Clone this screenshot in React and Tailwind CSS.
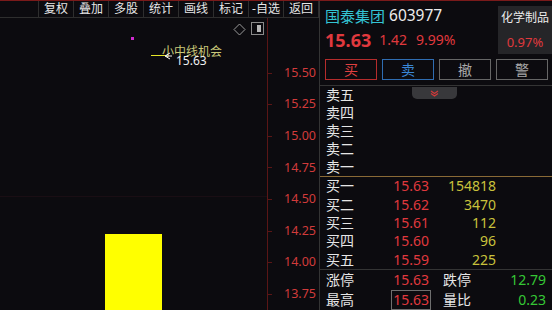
import React from "react";

const font = { fontFamily: '"Noto Sans", "Noto Sans CJK SC", sans-serif' };

const tools = ["复权", "叠加", "多股", "统计", "画线", "标记", "-自选", "返回"];
const axis = ["15.50", "15.25", "15.00", "14.75", "14.50", "14.25", "14.00", "13.75"];
const sells = ["卖五", "卖四", "卖三", "卖二", "卖一"];
const buys = [
  ["买一", "15.63", "154818"],
  ["买二", "15.62", "3470"],
  ["买三", "15.61", "112"],
  ["买四", "15.60", "96"],
  ["买五", "15.59", "225"],
];

export default function App() {
  return (
    <div
      className="w-[552px] h-[310px] bg-[#0c0b0f] border-t border-[#7a1a1a] flex overflow-hidden text-[#e6e6e6]"
      style={font}
    >
      {/* Left: toolbar + chart */}
      <div className="w-[319px] flex flex-col">
        <div className="h-[21px] flex border-b border-[#2e2e2e] text-[12px] leading-none">
          <div className="w-[38px]" />
          {tools.map((t) => (
            <div
              key={t}
              className="w-[35px] border-l border-[#2e2e2e] flex items-center justify-center"
            >
              {t}
            </div>
          ))}
          <div className="w-px bg-[#2e2e2e]" />
        </div>
        <div className="flex-1 flex">
          <div className="w-[268px] border-r border-[#5a1616] relative">
            {/* overlay icons */}
            <svg className="absolute left-[233px] top-[5px]" width="13" height="13" viewBox="0 0 13 13">
              <path d="M6.5 1 L12 6.5 L6.5 12 L1 6.5 Z" fill="none" stroke="#9a9a9a" strokeWidth="1" />
            </svg>
            <div className="absolute left-[251px] top-[4px] w-[13px] h-[13px] border border-[#8a8a8a] flex justify-end p-[2px]">
              <div className="w-[4px] bg-[#b8b8b8]" />
            </div>
            {/* chart items */}
            <div className="absolute left-[131px] top-[19px] w-[3px] h-[3px] bg-[#d02ad0]" />
            <div className="absolute left-[151px] top-[37px] w-[16px] h-px bg-[#e6e628]" />
            <div className="absolute left-[162px] top-[26px] text-[12px] leading-[16px] text-[#c9c879]">
              小中线机会
            </div>
            <svg className="absolute left-[163px] top-[34px]" width="10" height="9" viewBox="0 0 10 9">
              <path d="M7 1 L2 4 L7 7 M3 4 L9 4" fill="none" stroke="#f0f0f0" strokeWidth="1" />
            </svg>
            <div className="absolute left-[176px] top-[35px] text-[12px] leading-[16px] text-[#f0f0f0]">
              15.63
            </div>
            <div className="absolute left-0 right-0 top-[178px] h-px bg-[#1a0e14]" />
            <div className="absolute left-[105px] top-[216px] w-[57px] bottom-0 bg-[#ffff00]" />
          </div>
          <div className="w-[51px] pt-[39px] flex flex-col">
            {axis.map((a) => (
              <div key={a} className="h-[31.6px] flex items-center justify-between pr-[3px]">
                <div className="w-[4px] h-px bg-[#5a1616]" />
                <span className="text-[12.5px] leading-none text-[#d23b3b]">{a}</span>
              </div>
            ))}
          </div>
        </div>
      </div>

      {/* Right panel */}
      <div className="flex-1 border-l border-[#343434] flex flex-col relative">
        <div className="h-[54px] flex">
          <div className="flex-1 pl-[5px] pt-[4px] flex flex-col">
            <div className="flex items-center h-[22px] gap-[4px] text-[15px] leading-none">
              <span className="text-[#34c4d4]">国泰集团</span>
              <span className="text-[#ececec] text-[15.5px]">603977</span>
            </div>
            <div className="flex items-center h-[26px] text-[#e0393e] leading-none">
              <span className="text-[18px] font-bold mr-[8px]">15.63</span>
              <span className="text-[14px] mr-[9px]">1.42</span>
              <span className="text-[14px]">9.99%</span>
            </div>
          </div>
          <div className="w-[54px] mt-[5px] h-[48px] bg-[#252528] flex flex-col items-center pt-[5px]">
            <span className="text-[12px] leading-[14px] text-[#ececec]">化学制品</span>
            <span className="text-[13px] leading-none mt-[11px] text-[#e0393e]">0.97%</span>
          </div>
        </div>
        <div className="pt-[4px] pb-[5px] pl-[5px] flex gap-[5px] border-b border-[#343434] text-[14px] leading-none">
          <div className="w-[52px] h-[21px] border border-[#b52c2c] text-[#e04040] flex items-center justify-center">买</div>
          <div className="w-[52px] h-[21px] border border-[#2f6db2] text-[#3a86d6] flex items-center justify-center">卖</div>
          <div className="w-[52px] h-[21px] border border-[#666] text-[#a8a8a8] flex items-center justify-center">撤</div>
          <div className="w-[52px] h-[21px] border border-[#666] text-[#a8a8a8] flex items-center justify-center">警</div>
        </div>
        <div className="absolute left-[92px] top-[86px] w-[45px] h-[12px] bg-[#38383b] rounded-b-[5px] flex items-center justify-center">
          <svg width="9" height="7" viewBox="0 0 9 7">
            <path d="M1 1 L4.5 3.5 L8 1 M1 3.5 L4.5 6 L8 3.5" fill="none" stroke="#d03a3a" strokeWidth="1.2" />
          </svg>
        </div>
        <div className="flex flex-col text-[14px] leading-none">
          {sells.map((s) => (
            <div key={s} className="h-[18px] flex items-center pl-[6px]">{s}</div>
          ))}
        </div>
        <div className="h-px bg-[#8a6a36]" />
        <div className="flex flex-col text-[14px] leading-none">
          {buys.map(([l, p, v]) => (
            <div key={l} className="h-[18.4px] flex items-center pl-[6px]">
              <span className="w-[40px]">{l}</span>
              <span className="w-[63px] text-right text-[#e0393e]">{p}</span>
              <span className="w-[67px] text-right text-[#c9c23c]">{v}</span>
            </div>
          ))}
        </div>
        <div className="h-px bg-[#343434]" />
        <div className="flex flex-col text-[14px] leading-none">
          <div className="h-[20px] flex items-center pl-[6px] pr-[6px]">
            <span className="w-[40px]">涨停</span>
            <span className="w-[63px] text-right text-[#e0393e]">15.63</span>
            <span className="w-[40px] ml-[14px]">跌停</span>
            <span className="flex-1 text-right text-[#35c735]">12.79</span>
          </div>
          <div className="h-[20px] flex items-center pl-[6px] pr-[6px]">
            <span className="w-[40px]">最高</span>
            <span className="w-[65px] flex justify-end">
              <span className="border border-[#6e6e6e] h-[20px] px-[1px] flex items-center text-[#e0393e]">15.63</span>
            </span>
            <span className="w-[40px] ml-[12px]">量比</span>
            <span className="flex-1 text-right text-[#35c735]">0.23</span>
          </div>
        </div>
      </div>
    </div>
  );
}
